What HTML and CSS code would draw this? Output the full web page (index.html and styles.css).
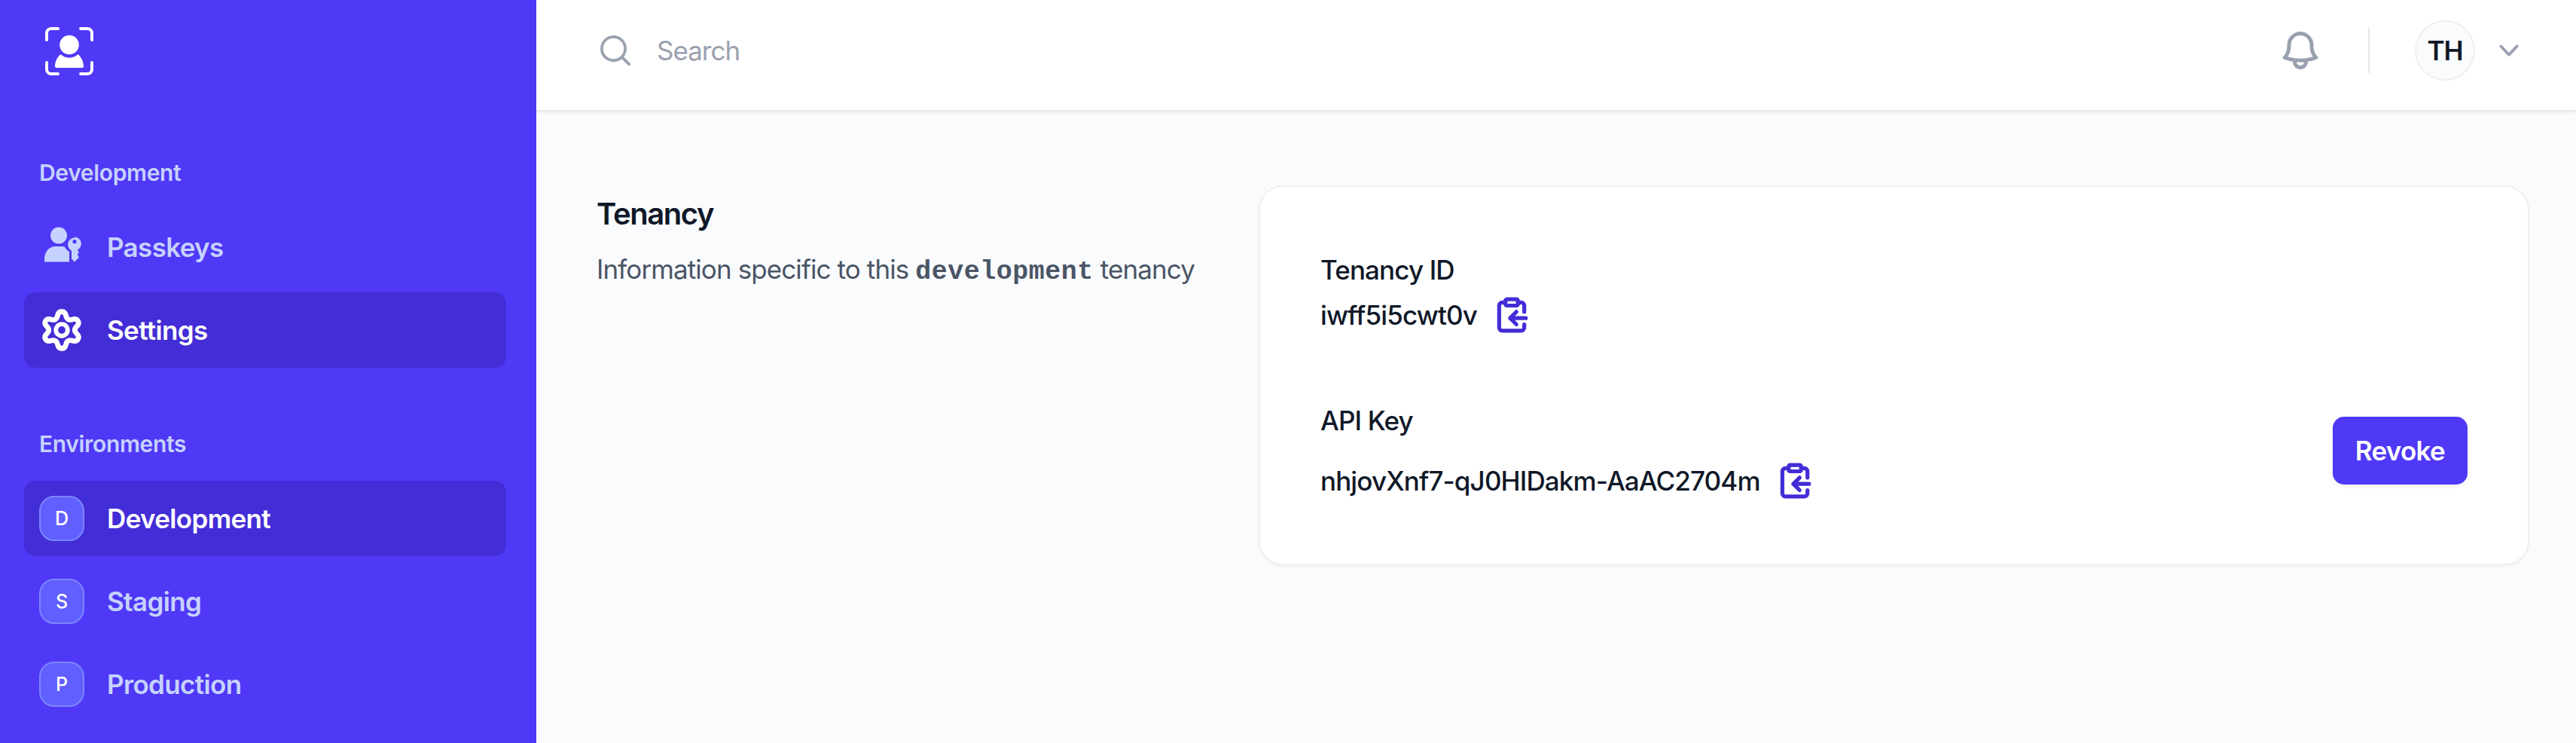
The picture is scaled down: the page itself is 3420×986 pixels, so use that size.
FILE: index.html
```
<!DOCTYPE html>
<html lang="en">
  <head>
    <meta charset="utf-8" />
    <title>Settings</title>
    <meta name="viewport" content="width=device-width, initial-scale=1" />
    <link rel="stylesheet" href="styles.css">
  </head>

  <body>
    <aside class="sidebar">
      <svg class="logo" viewBox="0 0 64 64" fill="none">
        <path d="M2 17V8a6 6 0 0 1 6-6h9M47 2h9a6 6 0 0 1 6 6v9M62 47v9a6 6 0 0 1-6 6h-9M17 62H8a6 6 0 0 1-6-6v-9" stroke="currentColor" stroke-width="4" stroke-linecap="round" />
        <circle cx="32" cy="23.5" r="12.8" fill="currentColor" />
        <path d="M20.5 36a16.5 16.5 0 0 0 23 0c4.500 4 7.500 10 7.500 16a2 2 0 0 1-2 2H15a2 2 0 0 1-2-2c0-6 3-12 7.500-16z" fill="currentColor" />
      </svg>

      <nav class="nav">
        <section>
          <div class="nav-label">Development</div>
          <ul class="nav-list">
            <li>
              <a class="nav-item" href="#">
                <svg class="nav-icon" viewBox="0 0 60 60" fill="currentColor">
                  <circle cx="26" cy="14.5" r="11" />
                  <path d="M7 49.500v-3.500c0-10 6-17 15-17h9c3 0 4 2 5 4l4 3v13.500z" />
                  <path fill-rule="evenodd" d="M47 16.500a9 9 0 0 1 4 17v1l2 2-2 3v1l2 3-6 6-4-4v-11a9 9 0 0 1 4-17zm0 3.400a2.700 2.700 0 1 0 0 5.400 2.700 2.700 0 0 0 0-5.400z" />
                </svg>
                Passkeys
              </a>
            </li>
            <li>
              <a class="nav-item active" href="#">
                <svg class="nav-icon" viewBox="0 0 60 60" fill="none" stroke="currentColor" stroke-width="6.800" stroke-linejoin="round">
                  <path d="M30 5.500c3.300 0 5 2.300 5.700 5.800.9 4.200 4.100 6 8.100 4.700 3.300-1.100 6.200-.7 7.800 2 1.600 2.800.6 5.200-2 7.600-3.100 2.800-3.100 6 0 8.800 2.600 2.400 3.600 4.800 2 7.600-1.600 2.700-4.500 3.100-7.800 2-4-1.300-7.200.5-8.100 4.700-.7 3.500-2.400 5.800-5.700 5.800s-5-2.300-5.700-5.800c-.9-4.200-4.100-6-8.100-4.700-3.300 1.100-6.200.7-7.800-2-1.600-2.800-.6-5.200 2-7.600 3.100-2.800 3.100-6 0-8.800-2.600-2.400-3.600-4.800-2-7.600 1.600-2.700 4.500-3.100 7.800-2 4 1.300 7.200-.5 8.100-4.700.7-3.500 2.400-5.800 5.700-5.800z" />
                  <circle cx="30" cy="30" r="7.800" stroke-width="5.800" />
                </svg>
                Settings
              </a>
            </li>
          </ul>
        </section>

        <section>
          <div class="nav-label">Environments</div>
          <ul class="nav-list">
            <li><a class="nav-item active" href="#"><span class="badge">D</span>Development</a></li>
            <li><a class="nav-item" href="#"><span class="badge">S</span>Staging</a></li>
            <li><a class="nav-item" href="#"><span class="badge">P</span>Production</a></li>
          </ul>
        </section>
      </nav>
    </aside>

    <div class="page">
      <header class="topbar">
        <form class="search" action="#">
          <svg class="icon-sm" viewBox="0 0 20 20" fill="currentColor">
            <path fill-rule="evenodd" d="M9 3.500a5.500 5.500 0 1 0 0 11 5.500 5.500 0 0 0 0-11zM2 9a7 7 0 1 1 12.452 4.391l3.328 3.329a.75.75 0 1 1-1.060 1.060l-3.329-3.328A7 7 0 0 1 2 9z" />
          </svg>
          <input class="search-input" type="search" placeholder="Search" />
        </form>
        <div class="actions">
          <svg class="bell" viewBox="0 0 24 24" fill="none" stroke="currentColor" stroke-width="2" stroke-linecap="round" stroke-linejoin="round">
            <path d="M14.857 17.082a23.848 23.848 0 0 0 5.454-1.310A8.967 8.967 0 0 1 18 9.750V9A6 6 0 0 0 6 9v.750a8.967 8.967 0 0 1-2.312 6.022c1.733.640 3.560 1.085 5.455 1.310m5.714 0a24.255 24.255 0 0 1-5.714 0m5.714 0a3 3 0 1 1-5.714 0" />
          </svg>
          <div class="divider"></div>
          <div class="user">
            <span class="avatar">TH</span>
            <svg class="icon-sm" viewBox="0 0 20 20" fill="currentColor">
              <path fill-rule="evenodd" d="M5.230 7.210a.750.750 0 0 1 1.060.020L10 11.168l3.710-3.938a.750.750 0 1 1 1.080 1.040l-4.250 4.500a.750.750 0 0 1-1.080 0l-4.250-4.500a.750.750 0 0 1 .020-1.060z" />
            </svg>
          </div>
        </div>
      </header>

      <main class="content">
        <div class="intro">
          <h2>Tenancy</h2>
          <p>Information specific to this <code>development</code> tenancy</p>
        </div>

        <div class="card">
          <div class="field">
            <div class="field-label">Tenancy ID</div>
            <div class="field-value">
              <span>iwff5i5cwt0v</span>
              <svg class="copy" viewBox="0 0 24 24">
                <rect x="8" y="2" width="8" height="4" rx="1" />
                <path d="M8 4H6a2 2 0 0 0-2 2v14a2 2 0 0 0 2 2h12a2 2 0 0 0 2-2v-2M16 4h2a2 2 0 0 1 2 2v4M21 14H11M15 10l-4 4 4 4" />
              </svg>
            </div>
          </div>

          <div class="field field-key">
            <div>
              <div class="field-label">API Key</div>
              <div class="field-value">
                <span>nhjovXnf7-qJ0HIDakm-AaAC2704m</span>
                <svg class="copy" viewBox="0 0 24 24">
                  <rect x="8" y="2" width="8" height="4" rx="1" />
                  <path d="M8 4H6a2 2 0 0 0-2 2v14a2 2 0 0 0 2 2h12a2 2 0 0 0 2-2v-2M16 4h2a2 2 0 0 1 2 2v4M21 14H11M15 10l-4 4 4 4" />
                </svg>
              </div>
            </div>
            <button class="button" type="button">Revoke</button>
          </div>
        </div>
      </main>
    </div>
  </body>
</html>
```
FILE: styles.css
```
* {
  box-sizing: border-box;
  margin: 0;
  padding: 0;
}

body {
  display: flex;
  height: 986px;
  overflow: hidden;
  background: #fafbfd;
  color: #101828;
  font-family: "Inter", sans-serif;
  font-size: 35px;
  line-height: 60px;
}

svg {
  display: block;
  flex-shrink: 0;
}

/* sidebar */
.sidebar {
  width: 712px;
  flex-shrink: 0;
  padding: 36px 40px 0 32px;
  background: #4f39f6;
  color: #fff;
}

.logo {
  width: 64px;
  height: 64px;
  margin-left: 28px;
}

.nav {
  display: flex;
  flex-direction: column;
  gap: 70px;
  margin-top: 98px;
}

.nav-label {
  padding: 1px 0 0 20px;
  height: 60px;
  color: #c6d2ff;
  font-size: 30px;
  font-weight: 600;
  letter-spacing: -0.35px;
}

.nav-list {
  display: flex;
  flex-direction: column;
  gap: 10px;
  margin-top: 20px;
  list-style: none;
}

.nav-item {
  display: flex;
  align-items: center;
  gap: 30px;
  height: 100px;
  padding: 0 20px;
  border-radius: 15px;
  color: #c6d2ff;
  font-weight: 600;
  letter-spacing: -0.65px;
  line-height: 58px;
  text-decoration: none;
}

.nav-item.active {
  background: #432dd7;
  color: #fff;
}

.nav-icon {
  width: 60px;
  height: 60px;
}

.badge {
  display: flex;
  align-items: center;
  justify-content: center;
  width: 60px;
  height: 60px;
  border: 2px solid #7c86ff;
  border-radius: 20px;
  background: #615fff;
  color: #fff;
  font-size: 25px;
  font-weight: 500;
  letter-spacing: 0;
}

/* top bar */
.page {
  flex: 1;
  min-width: 0;
}

.topbar {
  display: flex;
  align-items: center;
  height: 148px;
  padding: 0 64px 12px 80px;
  border-bottom: 2px solid #e5e7eb;
  background: #fff;
  box-shadow: 0 2.5px 5px rgba(0, 0, 0, 0.05);
  color: #99a1af;
}

.search {
  display: flex;
  flex: 1;
  align-items: center;
  gap: 30px;
}

.search-input {
  flex: 1;
  height: 60px;
  border: 0;
  outline: 0;
  background: transparent;
  color: #101828;
  font: inherit;
  letter-spacing: -1px;
}

.search-input::placeholder {
  color: #99a1af;
}

.icon-sm {
  width: 50px;
  height: 50px;
}

.actions {
  display: flex;
  align-items: center;
  gap: 60px;
}

.bell {
  width: 60px;
  height: 60px;
}

.divider {
  width: 2px;
  height: 60px;
  background: #e5e7eb;
}

.user {
  display: flex;
  align-items: center;
  gap: 20px;
}

.avatar {
  display: flex;
  align-items: center;
  justify-content: center;
  width: 80px;
  height: 80px;
  border: 2px solid #eeeff1;
  border-radius: 50%;
  background: #fafbfd;
  color: #101828;
  font-weight: 600;
  letter-spacing: -1px;
}

/* content */
.content {
  display: grid;
  grid-template-columns: 801px 1fr;
  gap: 80px;
  padding: 100px 64px 0 80px;
}

.intro {
  padding-top: 1px;
}

.intro h2 {
  font-size: 40px;
  font-weight: 600;
  letter-spacing: -1.4px;
  line-height: 70px;
}

.intro p {
  margin-top: 8px;
  color: #4a5565;
  letter-spacing: -0.9px;
  white-space: nowrap;
}

.intro code {
  font-family: "Liberation Mono", monospace;
  font-weight: 700;
  letter-spacing: 0.5px;
}

.card {
  height: 500px;
  padding: 80px;
  border-radius: 30px;
  background: #fff;
  box-shadow: 0 0 0 2px #eeeff1, 0 2.5px 5px rgba(0, 0, 0, 0.06);
  font-weight: 500;
  letter-spacing: -0.87px;
}

.field-value {
  display: flex;
  align-items: center;
  gap: 21px;
}

.field-key {
  display: flex;
  align-items: center;
  justify-content: space-between;
  margin-top: 80px;
}

.field-key .field-value {
  margin-top: 20px;
}

.copy {
  width: 50px;
  height: 50px;
  fill: none;
  stroke: #432dd7;
  stroke-width: 2.5;
  stroke-linecap: round;
  stroke-linejoin: round;
}

.button {
  height: 90px;
  padding: 0 30px;
  border: 0;
  border-radius: 15px;
  background: #4f39f6;
  box-shadow: 0 2.5px 5px rgba(0, 0, 0, 0.05);
  color: #fff;
  font: inherit;
  font-weight: 600;
  letter-spacing: -0.7px;
}
```
